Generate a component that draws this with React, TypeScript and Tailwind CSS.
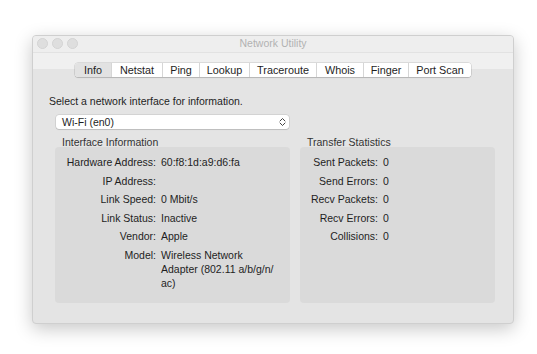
import { ReactNode } from 'react';

const tabs = [
  { name: 'Info', w: 36 },
  { name: 'Netstat', w: 51 },
  { name: 'Ping', w: 37 },
  { name: 'Lookup', w: 50 },
  { name: 'Traceroute', w: 67 },
  { name: 'Whois', w: 47 },
  { name: 'Finger', w: 45 },
  { name: 'Port Scan', w: 63 },
];

const ifaceRows: [string, ReactNode][] = [
  ['Hardware Address:', '60:f8:1d:a9:d6:fa'],
  ['IP Address:', ''],
  ['Link Speed:', '0 Mbit/s'],
  ['Link Status:', 'Inactive'],
  ['Vendor:', 'Apple'],
  [
    'Model:',
    <>
      Wireless Network
      <br />
      Adapter (802.11 a/b/g/n/
      <br />
      ac)
    </>,
  ],
];

const statRows = ['Sent Packets:', 'Send Errors:', 'Recv Packets:', 'Recv Errors:', 'Collisions:'];

function Row({ label, value, labelW }: { label: string; value: ReactNode; labelW: string }) {
  return (
    <div className="flex items-start leading-[14px]">
      <div className={`${labelW} shrink-0 text-right whitespace-nowrap`}>{label}</div>
      <div className="pl-[5px] whitespace-nowrap">{value}</div>
    </div>
  );
}

export default function App() {
  return (
    <div
      className="w-[537px] h-[354px] bg-white pt-[35px] pl-[32px] text-[10.5px] text-[#1e1e1e]"
      style={{ fontFamily: '"Liberation Sans", Arial, sans-serif' }}
    >
      <div className="w-[482px] h-[289px] flex flex-col rounded-[4px] border border-[#cfcfcf] bg-[#e4e4e4] shadow-[0_5px_18px_rgba(0,0,0,0.22)] overflow-hidden">
        {/* title bar */}
        <div className="relative h-[17px] shrink-0 bg-[#eeeeee] border-b border-[#e2e2e2] flex items-center justify-center">
          <div className="absolute left-[4px] top-[2px] flex gap-[4px]">
            <span className="w-[11px] h-[11px] rounded-full bg-[#dedede] border border-[#d3d3d3]" />
            <span className="w-[11px] h-[11px] rounded-full bg-[#dedede] border border-[#d3d3d3]" />
            <span className="w-[11px] h-[11px] rounded-full bg-[#dedede] border border-[#d3d3d3]" />
          </div>
          <span className="text-[10.5px] text-[#b2b2b2]">Network Utility</span>
        </div>
        {/* toolbar */}
        <div className="h-[16px] shrink-0 bg-[#f0f0f0]" />
        {/* tabs */}
        <div className="flex justify-center mt-[-6px]">
          <div className="flex h-[14px] rounded-[3px] bg-white shadow-[0_0_0_0.5px_rgba(0,0,0,0.18),0_1px_1px_rgba(0,0,0,0.12)] overflow-hidden">
            {tabs.map((t, i) => (
              <div
                key={t.name}
                style={{ width: t.w }}
                className={`flex items-center justify-center text-[10.8px] leading-none ${
                  i === 0 ? 'bg-[#e2e2e2]' : 'bg-white'
                } ${i > 0 ? 'border-l border-[#d6d6d6]' : ''}`}
              >
                {t.name}
              </div>
            ))}
          </div>
        </div>
        {/* body */}
        <div className="px-[16px] pt-[18px]">
          <div className="leading-[12px]">Select a network interface for information.</div>
        </div>
        <div className="pl-[23px] pt-[8px]">
          <div className="w-[233px] h-[14px] rounded-[3px] bg-white shadow-[0_0_0_0.5px_rgba(0,0,0,0.15),0_1px_1px_rgba(0,0,0,0.1)] flex items-center justify-between pl-[6px] pr-[3px]">
            <span className="leading-none">Wi-Fi (en0)</span>
            <svg width="7" height="10" viewBox="0 0 7 10" fill="none" stroke="#444" strokeWidth="1" strokeLinecap="round" strokeLinejoin="round">
              <path d="M1 4 L3.5 1.5 L6 4" />
              <path d="M1 6 L3.5 8.5 L6 6" />
            </svg>
          </div>
        </div>
        <div className="flex pl-[22px] pr-[18px] pt-[7px] gap-[10px]">
          <div className="w-[235px] flex flex-col">
            <div className="pl-[7px] leading-[12px] h-[12px] text-[#333]">Interface Information</div>
            <div className="h-[156px] mt-[-1px] rounded-[4px] bg-[#dadada] pt-[8px] flex flex-col gap-[4.6px]">
              {ifaceRows.map(([l, v]) => (
                <Row key={l} label={l} value={v} labelW="w-[101px]" />
              ))}
            </div>
          </div>
          <div className="flex-1 flex flex-col">
            <div className="pl-[7px] leading-[12px] h-[12px] text-[#333]">Transfer Statistics</div>
            <div className="h-[156px] mt-[-1px] rounded-[4px] bg-[#dadada] pt-[8px] flex flex-col gap-[4.6px]">
              {statRows.map((l) => (
                <Row key={l} label={l} value="0" labelW="w-[78px]" />
              ))}
            </div>
          </div>
        </div>
      </div>
    </div>
  );
}
